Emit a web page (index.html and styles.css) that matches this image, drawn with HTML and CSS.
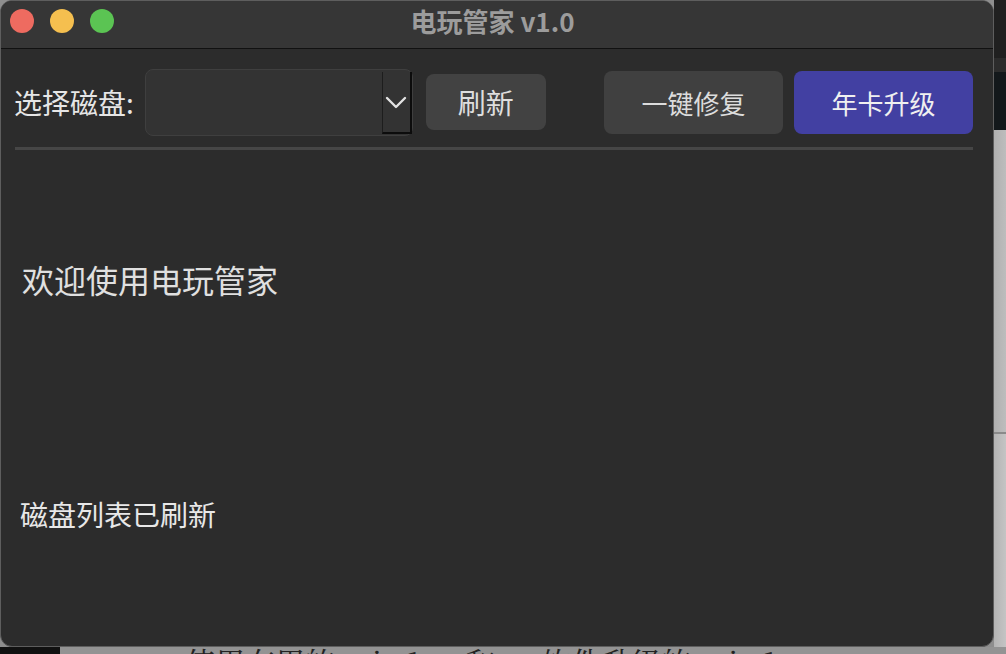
FILE: index.html
```html
<!DOCTYPE html>
<html lang="zh-CN">
<head>
    <meta charset="UTF-8">
    <meta name="viewport" content="width=device-width, initial-scale=1.0">
    <title>电玩管家 v1.0</title>
    <link rel="stylesheet" href="styles.css">
</head>
<body>
    <div class="screen">
        <div class="window">
            <div class="titlebar">
                <div class="lights">
                    <span class="light close"></span>
                    <span class="light minimize"></span>
                    <span class="light zoom"></span>
                </div>
                <div class="title">电玩管家 v1.0</div>
                <div></div>
            </div>
            <div class="content">
                <div class="toolbar">
                    <label class="disk-label" for="disk">选择磁盘:</label>
                    <div class="combo" id="disk">
                        <div class="combo-value"></div>
                        <div class="combo-arrow">
                            <svg width="22" height="13" viewBox="0 0 22 13">
                                <polyline points="2,2 11,11 20,2" fill="none" stroke="#e2e2e2" stroke-width="2.4" stroke-linecap="round" stroke-linejoin="round"/>
                            </svg>
                        </div>
                    </div>
                    <button class="btn btn-refresh">刷新</button>
                    <div class="spacer"></div>
                    <button class="btn btn-fix">一键修复</button>
                    <button class="btn btn-upgrade">年卡升级</button>
                </div>
                <div class="separator"></div>
                <div class="welcome">欢迎使用电玩管家</div>
                <div class="status">磁盘列表已刷新</div>
            </div>
        </div>
        <div class="behind-right">
            <div class="stripe s1"></div>
            <div class="stripe s2"></div>
            <div class="stripe s3"></div>
            <div class="stripe s4"></div>
            <div class="stripe s5"></div>
        </div>
    </div>
    <div class="behind-bottom">
        <div class="dock-edge"></div>
        <div class="page-text">使用有用的 mix 1 一 和 一 软件升级的 mix 1 .</div>
    </div>
</body>
</html>
```

FILE: styles.css
```css
body {
    margin: 0;
    width: 1006px;
    height: 654px;
    overflow: hidden;
    background-color: #8e8e8e;
    font-family: "Noto Sans CJK SC", "Noto Sans", sans-serif;
}
.screen {
    display: flex;
    height: 647px;
}
.window {
    width: 994px;
    height: 647px;
    box-sizing: border-box;
    border: 1px solid #5e5e5e;
    border-radius: 12px;
    background-color: #2c2c2c;
    overflow: hidden;
    display: flex;
    flex-direction: column;
    flex-shrink: 0;
}
.titlebar {
    height: 47px;
    flex-shrink: 0;
    background-color: #363636;
    border-bottom: 1px solid #111;
    display: grid;
    grid-template-columns: 1fr auto 1fr;
    align-items: center;
    padding: 0 18px 0 9px;
}
.lights {
    display: flex;
    gap: 16px;
    padding-bottom: 7px;
}
.light {
    width: 24px;
    height: 24px;
    border-radius: 50%;
}
.close { background-color: #ee6b60; }
.minimize { background-color: #f5bf4f; }
.zoom { background-color: #5bc453; }
.title {
    color: #9c9c9c;
    font-size: 26px;
    font-weight: bold;
    line-height: 30px;
    padding-bottom: 7px;
}
.content {
    padding: 19px 20px 0 13px;
}
.toolbar {
    display: flex;
    align-items: center;
    height: 68px;
}
.disk-label {
    color: #e6e6e6;
    font-size: 28px;
    margin-right: 11px;
}
.combo {
    width: 268px;
    height: 67px;
    box-sizing: border-box;
    display: flex;
    background-color: #333;
    border: 1px solid #3f3f3f;
    border-radius: 8px;
    margin-right: 13px;
}
.combo-value {
    flex: 1;
}
.combo-arrow {
    width: 30px;
    margin: 2px 0 1px;
    box-sizing: border-box;
    border-left: 1px solid #1d1d1d;
    border-right: 2px solid #0c0c0c;
    border-bottom: 2px solid #0c0c0c;
    display: flex;
    align-items: center;
    justify-content: center;
    padding-top: 2px;
}
.btn {
    border: none;
    border-radius: 8px;
    font-family: inherit;
    cursor: pointer;
    padding: 0;
}
.btn-refresh {
    width: 120px;
    height: 56px;
    background-color: #424242;
    color: #dedede;
    font-size: 28px;
}
.spacer {
    flex: 1;
}
.btn-fix,
.btn-upgrade {
    width: 179px;
    height: 63px;
    font-size: 26px;
}
.btn-fix {
    background-color: #404040;
    color: #dcdcdc;
    margin-right: 11px;
}
.btn-upgrade {
    background-color: #4240a2;
    color: #f0f0f0;
}
.separator {
    height: 3px;
    background-color: #464646;
    margin: 11px 0 0 1px;
}
.welcome {
    color: #e0e0e0;
    font-size: 32px;
    line-height: 40px;
    margin: 109px 0 0 8px;
}
.status {
    color: #e8e8e8;
    font-size: 28px;
    line-height: 36px;
    margin: 197px 0 0 6px;
}
.behind-right {
    flex: 1;
    display: flex;
    flex-direction: column;
}
.stripe.s1 { height: 58px; background-color: #202020; }
.stripe.s2 { height: 14px; background-color: #2c2c2c; }
.stripe.s3 { height: 58px; background-color: #13181b; }
.stripe.s4 {
    height: 302px;
    background: linear-gradient(to right, #b0b0b0, #bdbdbd);
    border-bottom: 2px solid #8a8a8a;
}
.stripe.s5 {
    flex: 1;
    background: linear-gradient(to right, #b4b4b4, #c4c4c4);
}
.behind-bottom {
    height: 7px;
    display: flex;
    overflow: hidden;
}
.dock-edge {
    width: 60px;
    background-color: #111;
}
.page-text {
    padding-left: 125px;
    font-family: "Noto Serif CJK SC", "Liberation Serif", serif;
    font-size: 30px;
    line-height: 28px;
    color: #222;
    white-space: nowrap;
    background-color: #939393;
    flex: 1;
}
```
